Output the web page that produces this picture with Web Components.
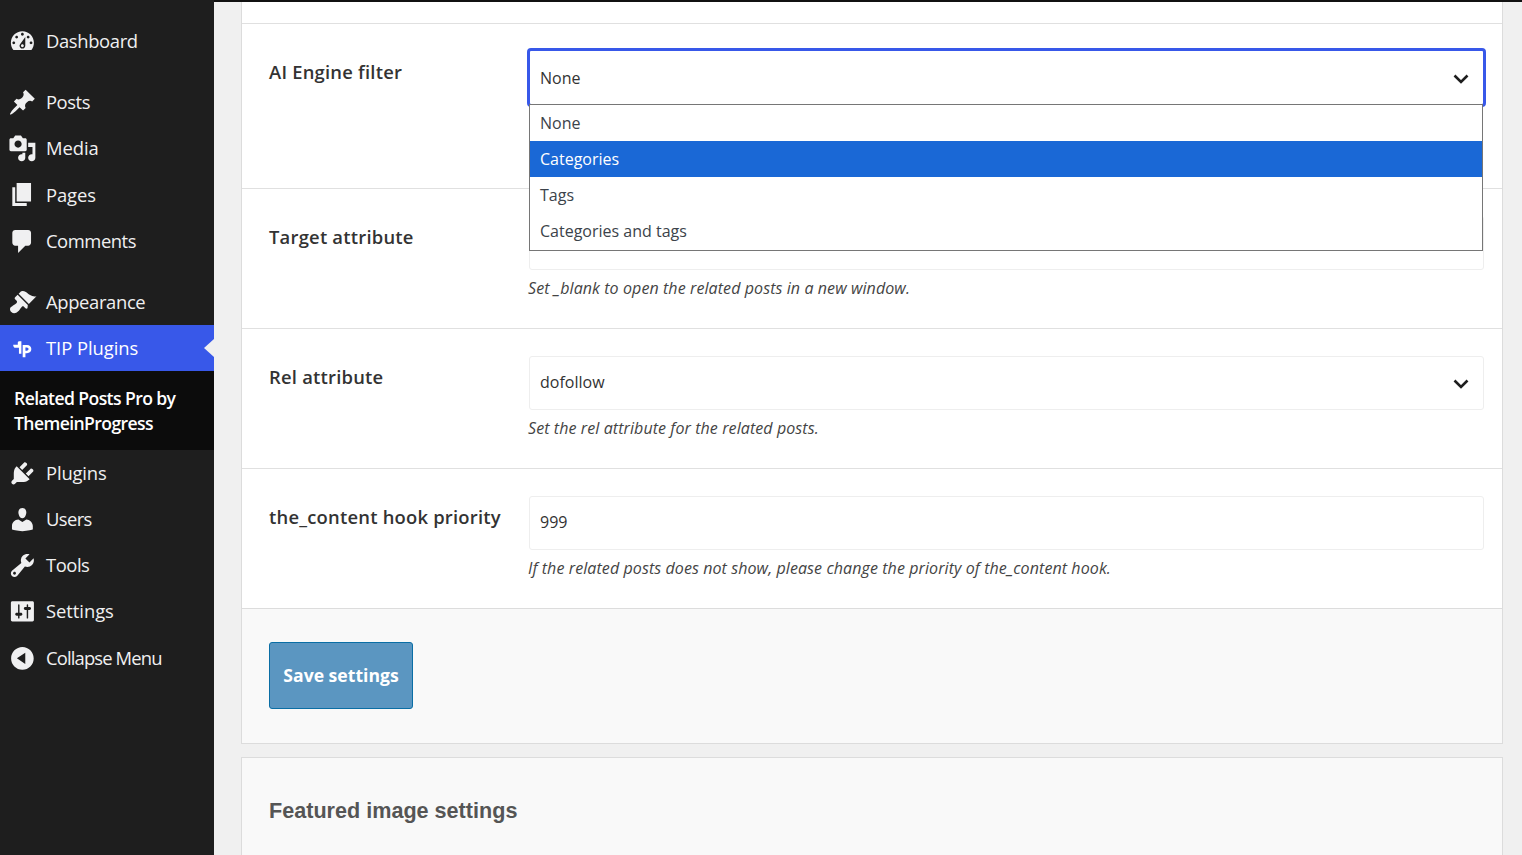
<!doctype html>
<html>
<head>
<meta charset="utf-8">
<style>
  html, body { margin: 0; height: 100%; overflow: hidden; background: #f0f0f0; }
  body { font-family: "Open Sans", sans-serif; }
  wp-shell { height: 855px; }
</style>
</head>
<body>
<wp-shell>
  <admin-menu slot="menu">
    <menu-item icon="dashboard" label="Dashboard" style="height:46px;margin:18px 0 15.4px;--ls:-.35px"></menu-item>
    <menu-item icon="post" label="Posts"></menu-item>
    <menu-item icon="media" label="Media" style="--ls:-.05px"></menu-item>
    <menu-item icon="page" label="Pages" style="--ls:-.1px"></menu-item>
    <menu-item icon="comments" label="Comments" style="margin-bottom:15px"></menu-item>
    <menu-item icon="appearance" label="Appearance" style="height:45.8px;--ls:-.35px"></menu-item>
    <menu-item icon="tip" label="TIP Plugins" current style="height:46px;--ls:-.05px"></menu-item>
    <sub-menu>Related Posts Pro by ThemeinProgress</sub-menu>
    <menu-item icon="plugins" label="Plugins" style="height:46px;--ls:-.15px"></menu-item>
    <menu-item icon="users" label="Users" style="height:46px;--ls:-.6px"></menu-item>
    <menu-item icon="tools" label="Tools" style="height:46px"></menu-item>
    <menu-item icon="settings" label="Settings" style="height:46px;--ls:-.05px"></menu-item>
    <menu-item icon="collapse" label="Collapse Menu" style="height:48px;--ls:-.85px"></menu-item>
  </admin-menu>

  <settings-card>
    <div style="height:21px"></div>
    <setting-row label="AI Engine filter" height="165">
      <select-box value="None" open></select-box>
    </setting-row>
    <setting-row label="Target attribute" height="140" note="Set _blank to open the related posts in a new window.">
      <select-box value=""></select-box>
    </setting-row>
    <setting-row label="Rel attribute" height="140" note="Set the rel attribute for the related posts.">
      <select-box value="dofollow"></select-box>
    </setting-row>
    <setting-row label="the_content hook priority" height="140" note="If the related posts does not show, please change the priority of the_content hook.">
      <select-box value="999" plain></select-box>
    </setting-row>
    <card-footer>Save settings</card-footer>
  </settings-card>
  <section-head>Featured image settings</section-head>
</wp-shell>

<script>
const ICONS = {
  dashboard: "M3.76 16h12.48c1.1-1.37 1.76-3.11 1.76-5 0-4.42-3.58-8-8-8s-8 3.58-8 8c0 1.89.66 3.63 1.76 5zM10 4c.55 0 1 .45 1 1s-.45 1-1 1-1-.45-1-1 .45-1 1-1zM6 6c.55 0 1 .45 1 1s-.45 1-1 1-1-.45-1-1 .45-1 1-1zm8 0c.55 0 1 .45 1 1s-.45 1-1 1-1-.45-1-1 .45-1 1-1zm-5.37 5.55L12 7v6c0 1.1-.9 2-2 2s-2-.9-2-2c0-.57.24-1.08.63-1.45zM4 10c.55 0 1 .45 1 1s-.45 1-1 1-1-.45-1-1 .45-1 1-1zm12 0c.55 0 1 .45 1 1s-.45 1-1 1-1-.45-1-1 .45-1 1-1zm-5 3c0-.55-.45-1-1-1s-1 .45-1 1 .45 1 1 1 1-.45 1-1z",
  post: "M10.44 3.02l1.82-1.82 6.36 6.35-1.83 1.82c-1.05-.68-2.48-.57-3.41.36l-.75.75c-.92.93-1.04 2.35-.35 3.41l-1.83 1.82-2.41-2.41-2.8 2.79c-.42.42-3.38 2.71-3.8 2.29s1.86-3.39 2.28-3.81l2.79-2.79L4.1 9.36l1.83-1.82c1.05.69 2.48.57 3.4-.36l.75-.75c.93-.92 1.05-2.35.36-3.41z",
  media: "M13 11V4c0-.55-.45-1-1-1h-1.67L9 1H5L3.67 3H2c-.55 0-1 .45-1 1v7c0 .55.45 1 1 1h10c.55 0 1-.45 1-1zM7 4.5c1.38 0 2.5 1.12 2.5 2.5S8.38 9.5 7 9.5 4.5 8.38 4.5 7 5.62 4.5 7 4.5zM14 6h5v10.5c0 1.38-1.12 2.5-2.5 2.5S14 17.88 14 16.5s1.12-2.5 2.5-2.5c.17 0 .34.02.5.05V9h-3V6zm-4 8.05V13h2v3.5c0 1.38-1.12 2.5-2.5 2.5S7 17.88 7 16.5 8.12 14 9.5 14c.17 0 .34.02.5.05z",
  page: "M6 15V2h10v13H6zm-1 1h8v2H3V5h2v11z",
  comments: "M5 2h9c1.1 0 2 .9 2 2v7c0 1.1-.9 2-2 2h-2l-5 5v-5H5c-1.1 0-2-.9-2-2V4c0-1.1.9-2 2-2z",
  appearance: "M14.48 11.06L7.41 3.99l1.5-1.5c.5-.56 2.3-.47 3.51.32 1.21.8 1.43 1.28 2.91 2.1 1.18.64 2.45 1.26 4.45.85zm-.71.71L6.7 4.7 4.93 6.47c-.39.39-.39 1.02 0 1.41l1.06 1.06c.39.39.39 1.03 0 1.42-.6.6-1.43 1.11-2.21 1.69-.35.26-.7.53-1.01.84C1.43 13.23.78 15.17 2.3 16.7c1.53 1.52 3.47.87 4.81-.47.3-.3.57-.65.83-1 .58-.78 1.09-1.61 1.7-2.22.39-.39 1.02-.39 1.41 0l1.06 1.06c.39.39 1.02.39 1.41 0z",
  plugins: "M13.11 4.36L9.87 7.6 8 5.73l3.24-3.24c.35-.34 1.05-.2 1.56.32.52.51.66 1.21.31 1.55zm-8 1.77l.91-1.12 9.01 9.01-1.19.84c-.71.71-2.63 1.16-3.82 1.16H6.14L4.9 17.26c-.59.59-1.54.59-2.12 0-.59-.58-.59-1.53 0-2.12l1.24-1.24v-3.88c0-1.13.4-3.19 1.09-3.89zm7.26 3.97l3.24-3.24c.34-.35 1.04-.21 1.55.31.52.51.66 1.21.31 1.55l-3.24 3.25z",
  users: "M10 9.25c-2.27 0-2.73-3.44-2.73-3.44C7 4.02 7.82 2 9.97 2c2.16 0 2.98 2.02 2.71 3.81 0 0-.41 3.44-2.68 3.44zm0 2.57L12.72 10c2.39 0 4.52 2.33 4.52 4.53v2.49s-3.65 1.13-7.24 1.13c-3.65 0-7.24-1.13-7.24-1.13v-2.49c0-2.25 1.94-4.48 4.47-4.48z",
  tools: "M16.68 9.77c-1.34 1.34-3.3 1.67-4.95.99l-5.41 6.52c-.99.99-2.59.99-3.58 0s-.99-2.59 0-3.57l6.52-5.42c-.68-1.65-.35-3.61.99-4.95 1.28-1.28 3.12-1.62 4.72-1.06l-2.89 2.89 2.82 2.82 2.86-2.87c.53 1.58.18 3.39-1.08 4.65zM3.81 16.21c.4.39 1.04.39 1.43 0 .4-.4.4-1.04 0-1.43-.39-.4-1.03-.4-1.43 0-.39.39-.39 1.03 0 1.43z",
  settings: "M18 16V4c0-.55-.45-1-1-1H3c-.55 0-1 .45-1 1v12c0 .55.45 1 1 1h14c.55 0 1-.45 1-1zM8 11h1c.55 0 1 .45 1 1s-.45 1-1 1H8v1.5c0 .28-.22.5-.5.5s-.5-.22-.5-.5V13H6c-.55 0-1-.45-1-1s.45-1 1-1h1V5.5c0-.28.22-.5.5-.5s.5.22.5.5V11zm5-2h-1c-.55 0-1-.45-1-1s.45-1 1-1h1V5.5c0-.28.22-.5.5-.5s.5.22.5.5V7h1c.55 0 1 .45 1 1s-.45 1-1 1h-1v5.5c0 .28-.22.5-.5.5s-.5-.22-.5-.5V9z",
  collapse: "M10 2.16c4.33 0 7.84 3.51 7.84 7.84s-3.51 7.84-7.84 7.84S2.16 14.33 2.16 10 5.71 2.16 10 2.16zm2 11.72V6.12L6.18 9.97z",
  // small logo, blurry in the reference
  tip: "M3.6 7.4h3.2V6c0-.6.5-1 1-1h1.5v8.8H7.6V9.6H5.2c-1 0-1.6-1-1.6-2.2zM10.2 7.6h3c1.9 0 3 1.2 3 2.9s-1.1 2.9-3 2.9h-1.1v2.7h-1.9zm1.9 1.8v2.2h.9c.8 0 1.3-.5 1.3-1.1s-.5-1.1-1.3-1.1z"
};

class WpShell extends HTMLElement {
  constructor() {
    super();
    this.attachShadow({ mode: "open" }).innerHTML = `
      <style>
        :host { display: flex; }
        .side { flex: 0 0 214px; background: #1e1e1e; height: 855px; overflow: hidden; }
        .main { flex: 1; min-width: 0; padding: 0 19px 0 27px; border-top: 2px solid #111; height: 853px; overflow: hidden; }
      </style>
      <div class="side"><slot name="menu"></slot></div>
      <div class="main"><slot></slot></div>`;
  }
}

class AdminMenu extends HTMLElement {
  constructor() {
    super();
    this.attachShadow({ mode: "open" }).innerHTML = `
      <style>:host { display: block; }</style><slot></slot>`;
  }
}

class MenuItem extends HTMLElement {
  connectedCallback() {
    const icon = this.getAttribute("icon");
    const on = this.hasAttribute("current");
    this.attachShadow({ mode: "open" }).innerHTML = `
      <style>
        :host { display: flex; align-items: center; height: 46.2px; position: relative;
          font: 18.4px/1 "Open Sans", sans-serif; letter-spacing: var(--ls, -.45px); color: #f0f0f1; }
        :host([current]) { background: #3858e9; color: #fff; }
        svg { flex: 0 0 28.8px; height: 28.8px; margin: 0 9.2px 0 8px; fill: currentColor; }
        .tip { position: absolute; right: 0; top: 14px; border: 9px solid transparent; border-left: 0; border-right: 10px solid #f0f0f0; }
      </style>
      <svg viewBox="0 0 20 20"><path fill-rule="evenodd" d="${ICONS[icon]}"/></svg>
      <span>${this.getAttribute("label")}</span>
      ${on ? '<i class="tip"></i>' : ""}`;
  }
}

class SubMenu extends HTMLElement {
  constructor() {
    super();
    this.attachShadow({ mode: "open" }).innerHTML = `
      <style>
        :host { display: block; background: #0c0c0c; color: #fff; padding: 15px 30px 14px 14px;
          font: 600 17.6px/25px "Open Sans", sans-serif; letter-spacing: -.6px; }
      </style><slot></slot>`;
  }
}

class SettingsCard extends HTMLElement {
  constructor() {
    super();
    this.attachShadow({ mode: "open" }).innerHTML = `
      <style>
        :host { display: block; background: #fff; border: 1px solid #dcdcdc; border-top: 0; }
      </style><slot></slot>`;
  }
}

class SettingRow extends HTMLElement {
  connectedCallback() {
    const note = this.getAttribute("note");
    this.attachShadow({ mode: "open" }).innerHTML = `
      <style>
        :host { display: grid; grid-template-columns: 260px 1fr; box-sizing: border-box;
          height: ${this.getAttribute("height")}px; border-top: 1px solid #e0e0e0;
          padding: 27px 18px 0 27px; color: #333; }
        label { font: 600 18.4px/24px "Open Sans", sans-serif; margin-top: 9px; letter-spacing: .22px; white-space: nowrap; }
        p { margin: 6px 0 0 -1px; font: italic 16px/24px "Open Sans", sans-serif; letter-spacing: .09px; color: #444; }
      </style>
      <label>${this.getAttribute("label")}</label>
      <div><slot></slot>${note ? `<p>${note}</p>` : ""}</div>`;
  }
}

class SelectBox extends HTMLElement {
  connectedCallback() {
    const open = this.hasAttribute("open");
    const plain = this.hasAttribute("plain");
    const opts = ["None", "Categories", "Tags", "Categories and tags"];
    this.attachShadow({ mode: "open" }).innerHTML = `
      <style>
        :host { display: block; position: relative; height: 54px; box-sizing: border-box;
          border: 1px solid #eeeeee; border-radius: 3px; background: #fff;
          font: 16px/50px "Open Sans", sans-serif; color: #333; padding-left: 10px; }
        :host([open]) { border: 3px solid #3858e9; border-radius: 4px; height: 59px; margin: -3px -2px 0 -2px; line-height: 54px; }
        svg { position: absolute; right: 14px; top: 50%; margin-top: -5px; width: 16px; height: 12px; fill: none; stroke: #1e1e1e; stroke-width: 2.6; }
        .list { position: absolute; left: -1px; right: 0; top: 53px; background: #fff; border: 1px solid #767676;
          line-height: 36px; margin: 0; padding: 0 0 1px; list-style: none; z-index: 5; }
        li { padding-left: 10px; height: 36px; color: #3c434a; }
        li.sel { background: #1a68d6; color: #fff; }
      </style>
      <span>${this.getAttribute("value")}</span>
      ${plain ? "" : '<svg viewBox="0 0 16 12"><path d="M1.5 2.5L8 9l6.5-6.5"/></svg>'}
      ${open ? `<ul class="list">${opts.map((o, i) => `<li class="${i == 1 ? "sel" : ""}">${o}</li>`).join("")}</ul>` : ""}`;
  }
}

class CardFooter extends HTMLElement {
  constructor() {
    super();
    this.attachShadow({ mode: "open" }).innerHTML = `
      <style>
        :host { display: block; height: 135px; box-sizing: border-box; background: #f9f9f9; border-top: 1px solid #dcdcdc; padding: 33px 27px; }
        button { width: 144px; height: 67px; background: #5b96c1; border: 1px solid #0a6ea5; border-radius: 3px; color: #fff;
          font: 700 17.6px "Open Sans", sans-serif; padding: 0 0 2px; }
      </style><button><slot></slot></button>`;
  }
}

class SectionHead extends HTMLElement {
  constructor() {
    super();
    this.attachShadow({ mode: "open" }).innerHTML = `
      <style>
        :host { display: block; margin-top: 13px; height: 200px; background: #f9f9f9; border: 1px solid #dcdcdc; padding: 39px 27px; }
        h2 { margin: 0; font: 700 21.6px/28px "Liberation Sans", sans-serif; color: #555; }
      </style><h2><slot></slot></h2>`;
  }
}

customElements.define("wp-shell", WpShell);
customElements.define("admin-menu", AdminMenu);
customElements.define("menu-item", MenuItem);
customElements.define("sub-menu", SubMenu);
customElements.define("settings-card", SettingsCard);
customElements.define("setting-row", SettingRow);
customElements.define("select-box", SelectBox);
customElements.define("card-footer", CardFooter);
customElements.define("section-head", SectionHead);
</script>
</body>
</html>
